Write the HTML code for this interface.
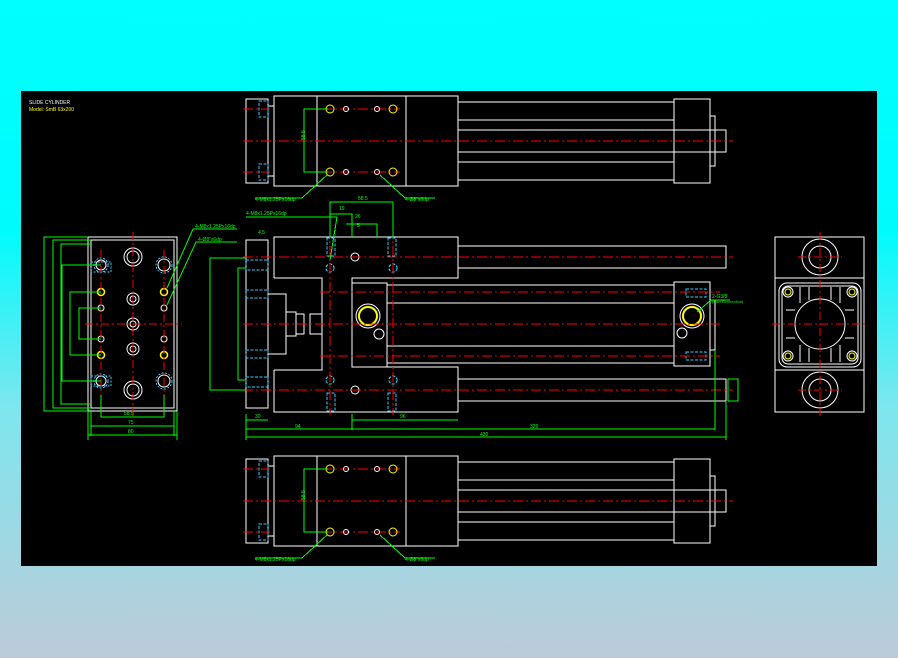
<!DOCTYPE html>
<html><head><style>
html,body{margin:0;padding:0;width:898px;height:658px;overflow:hidden;background:linear-gradient(#00ffff 0%,#00fbfd 35%,#7ee6ee 62%,#bdcbd8 100%);}
svg{position:absolute;left:0;top:0}
text{font-family:"Liberation Sans",sans-serif;}
</style></head><body>
<svg width="898" height="658" viewBox="0 0 898 658" shape-rendering="crispEdges">
<defs>
<g id="side" fill="none">
 <rect x="246" y="99" width="22" height="84" stroke="#fff"/>
 <rect x="268" y="106" width="6" height="70" stroke="#fff"/>
 <rect x="274" y="96" width="184" height="90" stroke="#fff"/>
 <line x1="317" y1="96" x2="317" y2="186" stroke="#fff"/>
 <line x1="406" y1="96" x2="406" y2="186" stroke="#fff"/>
 <g stroke="#fff">
  <line x1="458" y1="102" x2="674" y2="102"/><line x1="458" y1="120" x2="674" y2="120"/>
  <line x1="458" y1="162" x2="674" y2="162"/><line x1="458" y1="180" x2="674" y2="180"/>
  <rect x="458" y="130" width="268" height="22"/>
  <rect x="674" y="99" width="36" height="84"/>
  <rect x="710" y="116" width="5" height="50"/>
 </g>
 <g stroke="#3cf" stroke-dasharray="3,1.5"><rect x="259" y="101" width="9" height="16"/><rect x="259" y="164" width="9" height="16"/></g>
 <g stroke="#f00" stroke-dasharray="10,3,2,3"><line x1="243" y1="141" x2="733" y2="141"/><line x1="243" y1="109" x2="270" y2="109"/><line x1="243" y1="172" x2="270" y2="172"/>
  <line x1="322" y1="109" x2="400" y2="109"/><line x1="322" y1="172" x2="400" y2="172"/></g>
 <g stroke="#ff0" shape-rendering="auto"><circle cx="330" cy="109" r="4"/><circle cx="393" cy="109" r="4"/><circle cx="330" cy="172" r="4"/><circle cx="393" cy="172" r="4"/></g>
 <g stroke="#fff" shape-rendering="auto"><circle cx="346" cy="109" r="2.5"/><circle cx="377" cy="109" r="2.5"/><circle cx="346" cy="172" r="2.5"/><circle cx="377" cy="172" r="2.5"/></g>
 <polyline points="328,109 304,109 304,172 328,172" stroke="#0f0"/>
</g>
</defs>
<rect x="21" y="91" width="856" height="475" fill="#000"/>
<text x="29" y="104" fill="#fff" font-size="5">SLIDE CYLINDER</text>
<text x="29" y="111" fill="#ff0" font-size="5">Model: SmB 63x200</text>

<use href="#side"/>
<use href="#side" y="360"/>
<g fill="#0f0" font-size="5">
<text x="255" y="201">4-M8x1.25Px16dp</text><text x="405" y="201">4-Ø8"x6dp</text>
<text x="255" y="561">4-M8x1.25Px16dp</text><text x="405" y="561">4-Ø8"x6dp</text>
<text x="300" y="145" transform="rotate(-90 300 140)">58.5</text>
<text x="300" y="505" transform="rotate(-90 300 500)">58.5</text>
</g>
<g stroke="#0f0" fill="none"><line x1="255" y1="198" x2="302" y2="198"/><line x1="302" y1="198" x2="328" y2="174"/><line x1="405" y1="198" x2="435" y2="198"/><line x1="405" y1="198" x2="380" y2="175"/>
<line x1="255" y1="558" x2="302" y2="558"/><line x1="302" y1="558" x2="328" y2="534"/><line x1="405" y1="558" x2="435" y2="558"/><line x1="405" y1="558" x2="380" y2="535"/></g>

<g fill="none" stroke="#fff">
 <rect x="246" y="240" width="22" height="168"/>
 <rect x="268" y="294" width="18" height="60"/>
 <polyline points="274,278 274,237 458,237 458,278 352,278 352,367 458,367 458,412 274,412 274,370"/>
 <polyline points="274,278 322,278 322,370 274,370"/>
 <rect x="458" y="246" width="268" height="22"/>
 <rect x="458" y="379" width="268" height="22"/>
 <rect x="352" y="283" width="35" height="84"/>
 <line x1="387" y1="285" x2="674" y2="285"/><line x1="387" y1="363" x2="674" y2="363"/>
 <line x1="387" y1="303" x2="674" y2="303"/><line x1="387" y1="346" x2="674" y2="346"/>
 <rect x="674" y="282" width="36" height="84"/><rect x="710" y="300" width="5" height="50"/>
 <rect x="286" y="312" width="10" height="24"/><rect x="296" y="314" width="8" height="20"/><rect x="310" y="314" width="12" height="20"/>
 <g shape-rendering="auto"><circle cx="355" cy="257" r="4"/><circle cx="355" cy="390" r="4"/>
 <circle cx="379" cy="334" r="5"/></g>
</g>
<g shape-rendering="auto">
<circle cx="368" cy="316" r="12" fill="none" stroke="#fff"/><circle cx="368" cy="316" r="9" fill="none" stroke="#ff0" stroke-width="2"/>
<circle cx="692" cy="316" r="12" fill="none" stroke="#fff"/><circle cx="692" cy="316" r="9" fill="none" stroke="#ff0" stroke-width="2"/>
<circle cx="682" cy="333" r="5" fill="none" stroke="#fff"/>
</g>
<g stroke="#3cf" fill="none" stroke-dasharray="3,1.5">
 <rect x="327" y="238" width="8" height="18"/><rect x="388" y="238" width="8" height="18"/><rect x="327" y="393" width="8" height="18"/><rect x="388" y="393" width="8" height="18"/>
 <rect x="246" y="290" width="22" height="8"/><rect x="246" y="350" width="22" height="8"/>
 <rect x="246" y="260" width="22" height="10"/><rect x="246" y="377" width="22" height="10"/>
 <rect x="686" y="289" width="20" height="8"/><rect x="686" y="352" width="20" height="8"/>
 <circle cx="330" cy="268" r="4"/><circle cx="393" cy="268" r="4"/><circle cx="330" cy="380" r="4"/><circle cx="393" cy="380" r="4"/>
</g>
<g stroke="#f00" fill="none" stroke-dasharray="10,3,2,3">
 <line x1="243" y1="257" x2="733" y2="257"/><line x1="243" y1="390" x2="733" y2="390"/>
 <line x1="320" y1="292" x2="720" y2="292"/><line x1="243" y1="324" x2="720" y2="324"/><line x1="320" y1="356" x2="720" y2="356"/>
 <line x1="330" y1="228" x2="330" y2="415"/><line x1="393" y1="228" x2="393" y2="415"/>
</g>
<g stroke="#0f0" fill="none">
 <polyline points="330,237 330,202 393,202 393,237"/><polyline points="330,214 352,214 352,237"/><polyline points="346,224 377,224 377,237"/>
 <polyline points="246,258 210,258 210,390 246,390"/><polyline points="246,268 238,268 238,380 246,380"/>
 <line x1="246" y1="414" x2="246" y2="440"/><line x1="726" y1="402" x2="726" y2="440"/><line x1="352" y1="414" x2="352" y2="430"/>
 <line x1="246" y1="420" x2="268" y2="420"/><line x1="246" y1="429" x2="352" y2="429"/><line x1="352" y1="420" x2="458" y2="420"/>
 <line x1="352" y1="429" x2="715" y2="429"/><line x1="246" y1="437" x2="726" y2="437"/><line x1="715" y1="350" x2="715" y2="430"/>
 <rect x="728" y="379" width="10" height="22"/>
 <line x1="246" y1="217" x2="337" y2="217"/><line x1="337" y1="217" x2="330" y2="260"/>
 <polyline points="697,312 711,300 730,300"/>
</g>
<g fill="#0f0" font-size="5">
 <text x="246" y="215">4-M8x1.25Px16dp</text><text x="358" y="200">58.5</text><text x="339" y="210">19</text><text x="355" y="218">26</text><text x="357" y="227">5</text>
 <text x="255" y="418">30</text><text x="295" y="428">94</text><text x="400" y="418">96</text><text x="530" y="428">326</text><text x="480" y="436">430</text>
 <text x="712" y="298">2-G3/8</text><text x="712" y="303" font-size="4">(Port Connection)</text>
 <text x="258" y="234">4.5</text>
</g>

<g fill="none" stroke="#fff">
 <rect x="88" y="237" width="89" height="174"/><rect x="91" y="240" width="83" height="168"/>
 <g shape-rendering="auto">
 <circle cx="133" cy="257" r="9"/><circle cx="133" cy="257" r="6"/>
 <circle cx="133" cy="390" r="9"/><circle cx="133" cy="390" r="6"/>
 <circle cx="133" cy="299" r="6"/><circle cx="133" cy="299" r="3"/>
 <circle cx="133" cy="324" r="6"/><circle cx="133" cy="324" r="3"/>
 <circle cx="133" cy="349" r="6"/><circle cx="133" cy="349" r="3"/>
 <circle cx="164" cy="265" r="6"/><circle cx="164" cy="381" r="6"/>
 <circle cx="101" cy="308" r="3"/><circle cx="164" cy="308" r="3"/><circle cx="101" cy="339" r="3"/><circle cx="164" cy="339" r="3"/>
 <circle cx="101" cy="381" r="5"/><circle cx="101" cy="265" r="5"/></g>
</g>
<g fill="none" stroke="#ff0" stroke-width="1.5" shape-rendering="auto"><circle cx="101" cy="292" r="3.5"/><circle cx="164" cy="292" r="3.5"/><circle cx="101" cy="355" r="3.5"/><circle cx="164" cy="355" r="3.5"/></g>
<g fill="none" stroke="#3cf" stroke-dasharray="2,1.5"><rect x="91" y="262" width="20" height="10"/><rect x="91" y="376" width="20" height="10"/><circle cx="101" cy="265" r="7"/><circle cx="164" cy="265" r="8"/><circle cx="101" cy="381" r="7"/><circle cx="164" cy="381" r="8"/></g>
<g stroke="#f00" stroke-dasharray="8,3,2,3" fill="none">
 <line x1="85" y1="324" x2="182" y2="324"/><line x1="133" y1="232" x2="133" y2="416"/>
 <line x1="101" y1="250" x2="101" y2="395"/><line x1="164" y1="250" x2="164" y2="395"/>
</g>
<g stroke="#0f0" fill="none">
 <polyline points="88,237 44,237 44,411 88,411"/><polyline points="91,240 53,240 53,408 91,408"/><polyline points="91,244 61,244 61,404 91,404"/>
 <polyline points="101,265 62,265 62,381 101,381"/><polyline points="101,292 70,292 70,355 101,355"/><polyline points="101,308 79,308 79,339 101,339"/>
 <polyline points="101,395 101,417 164,417 164,395"/><line x1="91" y1="426" x2="174" y2="426"/><line x1="88" y1="435" x2="177" y2="435"/>
 <line x1="91" y1="410" x2="91" y2="436"/><line x1="174" y1="410" x2="174" y2="436"/><line x1="88" y1="411" x2="88" y2="440"/><line x1="177" y1="411" x2="177" y2="440"/>
 <polyline points="237,229 193,229 167,288" shape-rendering="auto"/><polyline points="237,242 196,242 167,305" shape-rendering="auto"/>
</g>
<g fill="#0f0" font-size="5"><text x="195" y="228">4-M8x1.25Px16dp</text><text x="198" y="241">4-Ø8"x6dp</text>
<text x="124" y="415">58.5</text><text x="128" y="424">75</text><text x="128" y="433">80</text></g>

<g fill="none" stroke="#fff">
 <rect x="775" y="237" width="89" height="175"/><line x1="775" y1="278" x2="864" y2="278"/><line x1="775" y1="370" x2="864" y2="370"/>
 <g shape-rendering="auto">
 <circle cx="820" cy="257" r="18"/><circle cx="820" cy="257" r="11"/>
 <circle cx="820" cy="390" r="18"/><circle cx="820" cy="390" r="11"/>
 <rect x="779" y="283" width="82" height="84" rx="8"/><rect x="782" y="286" width="76" height="78" rx="6"/>
 <circle cx="820" cy="324" r="25"/>
 <circle cx="788" cy="292" r="5"/><circle cx="852" cy="292" r="5"/><circle cx="788" cy="356" r="5"/><circle cx="852" cy="356" r="5"/></g>
 <line x1="800" y1="287" x2="800" y2="303"/><line x1="809" y1="287" x2="809" y2="300"/><line x1="831" y1="287" x2="831" y2="300"/><line x1="840" y1="287" x2="840" y2="303"/>
 <line x1="800" y1="345" x2="800" y2="362"/><line x1="809" y1="348" x2="809" y2="362"/><line x1="831" y1="348" x2="831" y2="362"/><line x1="840" y1="345" x2="840" y2="362"/>
 <line x1="786" y1="310" x2="795" y2="310"/><line x1="786" y1="338" x2="795" y2="338"/><line x1="845" y1="310" x2="854" y2="310"/><line x1="845" y1="338" x2="854" y2="338"/>
</g>
<g fill="none" stroke="#ff0" shape-rendering="auto"><circle cx="788" cy="292" r="3"/><circle cx="852" cy="292" r="3"/><circle cx="788" cy="356" r="3"/><circle cx="852" cy="356" r="3"/></g>
<g stroke="#f00" stroke-dasharray="8,3,2,3" fill="none">
 <line x1="820" y1="232" x2="820" y2="416"/><line x1="772" y1="324" x2="868" y2="324"/>
 <line x1="798" y1="257" x2="842" y2="257"/><line x1="798" y1="390" x2="842" y2="390"/>
</g>
</svg>
</body></html>
